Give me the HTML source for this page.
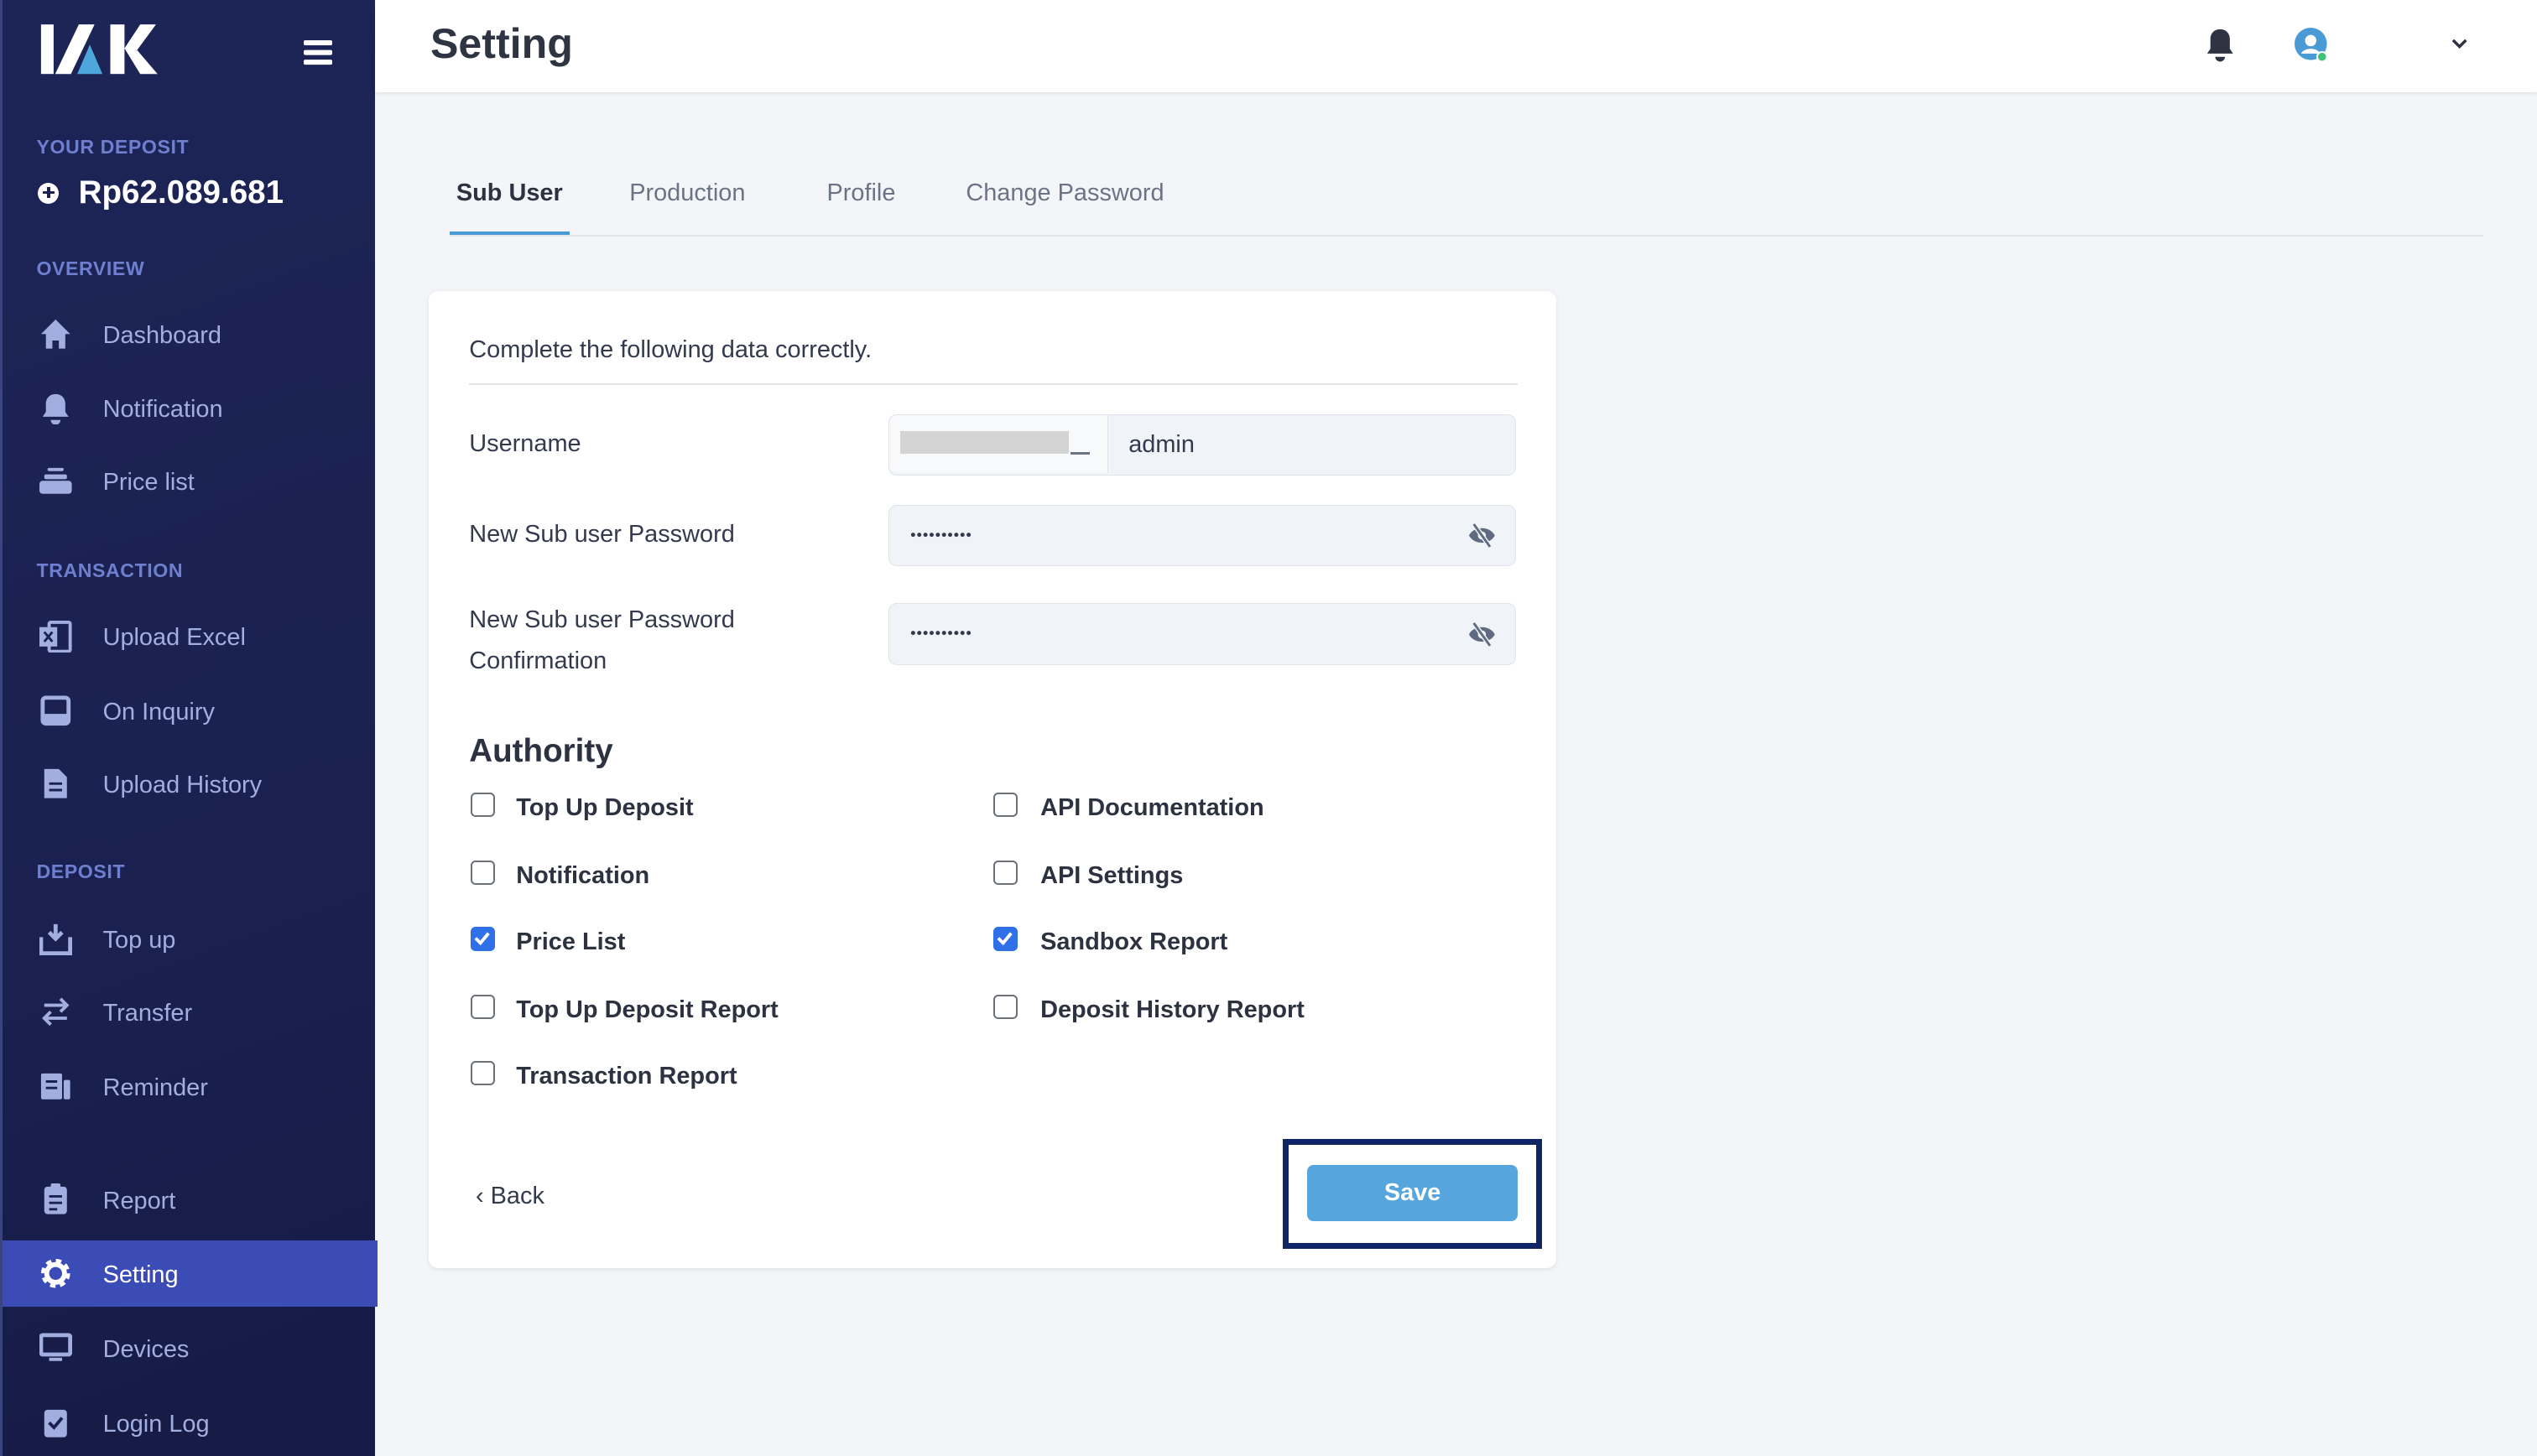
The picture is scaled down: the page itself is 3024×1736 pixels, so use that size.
<!DOCTYPE html>
<html><head><meta charset="utf-8"><style>
html,body{margin:0;padding:0}
body{width:1568px;height:888px;zoom:1.92857;overflow:hidden;background:#f3f5f9;font-family:"Liberation Sans",sans-serif;position:relative}
.sb{position:absolute;left:0;top:0;width:232px;height:900px;background:linear-gradient(160deg,#1d2557 0%,#1a2150 60%,#151b44 100%);border-left:2px solid #3a4580;box-sizing:border-box}
.a{position:absolute}
.sec{position:absolute;left:21px;font-size:12px;font-weight:bold;color:#6f7fcf;letter-spacing:.3px}
.it{position:absolute;left:0;width:232px;height:41px;display:flex;align-items:center;color:#a3aee0;font-size:15px}
.it svg{position:absolute;left:23px}
.it span{position:absolute;left:62px;top:13px}
.hdr{position:absolute;left:232px;top:0;right:0;height:57px;background:#fff;box-shadow:0 1px 3px rgba(0,0,0,.08)}
.card{position:absolute;left:265px;top:180px;width:697px;height:604px;background:#fff;border-radius:6px;box-shadow:0 1px 3px rgba(0,0,0,.08)}
.lbl{position:absolute;left:290px;font-size:15px;color:#333a4d}
.inp{position:absolute;left:549px;width:388px;height:38px;background:#f0f3f8;border:1px solid #e0e4ea;border-radius:5px;box-sizing:border-box}
.cb{position:absolute;width:15px;height:15px;border:1.5px solid #6b6f78;border-radius:3px;box-sizing:border-box;background:#fff}
.cb.on{background:#2f6fe8;border-color:#2f6fe8}
.cl{position:absolute;font-size:15px;font-weight:bold;color:#2d3240}
.tab{position:absolute;top:111px;font-size:15px;color:#6b7385}
.dots{position:absolute;left:13px;top:15px;font-size:6px;color:#333a4d;letter-spacing:0.2px}
</style></head><body>
<div class="sb">
 <svg class="a" style="left:23px;top:14px" width="74" height="34" viewBox="0 0 76 30" preserveAspectRatio="none"><rect x="1" y="1" width="8" height="27" fill="#fff"/><polygon points="10,28 25,1 35,1 20,28" fill="#fff"/><polygon points="24,28 32,12 40,28" fill="#4ea6dc"/><rect x="45" y="1" width="9" height="27" fill="#fff"/><polygon points="54,14 64,1 74,1 62,15 75,28 64,28" fill="#fff"/></svg>
 <div class="a" style="left:186px;top:25px;width:18px;height:3px;background:#fff;box-shadow:0 6px 0 #fff,0 12px 0 #fff;border-radius:1px"></div>
 <div class="sec" style="top:84px">YOUR DEPOSIT</div>
 <div class="a" style="left:22px;top:113px;width:13px;height:13px;border-radius:50%;background:#fff"></div>
 <div class="a" style="left:25px;top:118px;width:7px;height:2px;background:#1b2250"></div><div class="a" style="left:27.5px;top:115.5px;width:2px;height:7px;background:#1b2250"></div>
 <div class="a" style="left:47px;top:108px;font-size:20px;font-weight:bold;color:#fff">Rp62.089.681</div>
 <div class="sec" style="top:159px">OVERVIEW</div>
 <div class="it" style="top:186px"><svg width="20" height="20" viewBox="0 0 20 20"><path d="M10 1 1 10h3v9h4v-5h4v5h4v-9h3z" fill="#a3aee0"/></svg><span>Dashboard</span></div>
 <div class="it" style="top:232px"><svg width="20" height="20" viewBox="0 0 20 20"><path d="M10 1c-4 0-6 3-6 6v5l-2 3h16l-2-3V7c0-3-2-6-6-6zM7 17h6a3 3 0 0 1-6 0z" fill="#a3aee0"/></svg><span>Notification</span></div>
 <div class="it" style="top:277px"><svg width="20" height="20" viewBox="0 0 20 20"><rect x="0" y="10" width="20" height="8" rx="2" fill="#a3aee0"/><rect x="3" y="6" width="14" height="3" rx="1" fill="#a3aee0"/><rect x="5" y="2" width="10" height="2" rx="1" fill="#a3aee0"/></svg><span>Price list</span></div>
 <div class="sec" style="top:346px">TRANSACTION</div>
 <div class="it" style="top:373px"><svg width="20" height="20" viewBox="0 0 20 20"><rect x="6" y="1" width="13" height="18" rx="1" fill="none" stroke="#a3aee0" stroke-width="2"/><rect x="0" y="4" width="11" height="12" fill="#a3aee0"/><path d="M3 7l5 6M8 7l-5 6" stroke="#1b2250" stroke-width="1.5"/></svg><span>Upload Excel</span></div>
 <div class="it" style="top:419px"><svg width="20" height="20" viewBox="0 0 20 20"><rect x="2" y="2" width="16" height="16" rx="2" fill="none" stroke="#a3aee0" stroke-width="2.5"/><rect x="2" y="12" width="16" height="6" fill="#a3aee0"/></svg><span>On Inquiry</span></div>
 <div class="it" style="top:464px"><svg width="20" height="20" viewBox="0 0 20 20"><path d="M3 1h9l5 5v13H3z" fill="#a3aee0"/><path d="M6 10h8M6 14h8" stroke="#1b2250" stroke-width="1.5"/></svg><span>Upload History</span></div>
 <div class="sec" style="top:532px">DEPOSIT</div>
 <div class="it" style="top:560px"><svg width="20" height="20" viewBox="0 0 20 20"><path d="M1 9v10h18V9" fill="none" stroke="#a3aee0" stroke-width="2.5"/><path d="M10 1v9M6 6l4 4 4-4" stroke="#a3aee0" stroke-width="2.5" fill="none"/></svg><span>Top up</span></div>
 <div class="it" style="top:605px"><svg width="20" height="20" viewBox="0 0 20 20"><path d="M3 6h14M13 2l4 4-4 4M17 14H3M7 10l-4 4 4 4" stroke="#a3aee0" stroke-width="2" fill="none"/></svg><span>Transfer</span></div>
 <div class="it" style="top:651px"><svg width="20" height="20" viewBox="0 0 20 20"><rect x="1" y="2" width="13" height="16" rx="1" fill="#a3aee0"/><rect x="15" y="6" width="4" height="12" rx="1" fill="#a3aee0"/><path d="M4 7h7M4 11h7" stroke="#1b2250" stroke-width="1.5"/></svg><span>Reminder</span></div>
 <div class="it" style="top:721px"><svg width="20" height="20" viewBox="0 0 20 20"><rect x="3" y="2" width="14" height="17" rx="2" fill="#a3aee0"/><rect x="7" y="0" width="6" height="4" rx="1" fill="#a3aee0"/><path d="M6 8h8M6 12h8M6 16h5" stroke="#1b2250" stroke-width="1.5"/></svg><span>Report</span></div>
 <div class="it" style="top:767px;background:#3c4cb6;color:#fff"><svg width="20" height="20" viewBox="0 0 20 20"><circle cx="10" cy="10" r="7" fill="none" stroke="#fff" stroke-width="4" stroke-dasharray="3 2.5"/><circle cx="10" cy="10" r="5.5" fill="none" stroke="#fff" stroke-width="3"/></svg><span>Setting</span></div>
 <div class="it" style="top:813px"><svg width="20" height="20" viewBox="0 0 20 20"><rect x="1" y="2" width="18" height="12" rx="1" fill="none" stroke="#a3aee0" stroke-width="2.5"/><rect x="6" y="16" width="8" height="2" fill="#a3aee0"/></svg><span>Devices</span></div>
 <div class="it" style="top:859px"><svg width="20" height="20" viewBox="0 0 20 20"><rect x="3" y="2" width="14" height="17" rx="2" fill="#a3aee0"/><path d="M6 10l3 3 5-6" stroke="#1b2250" stroke-width="2" fill="none"/></svg><span>Login Log</span></div>
</div>
<div class="hdr">
 <div class="a" style="left:34px;top:12px;font-size:26px;font-weight:bold;color:#2f3442">Setting</div>
 <svg class="a" style="left:1130px;top:17px" width="20" height="22" viewBox="0 0 20 22"><path d="M10 1c-4 0-6 3-6 6v6l-2 3h16l-2-3V7c0-3-2-6-6-6zM7 18h6a3 3 0 0 1-6 0z" fill="#2f3442"/></svg>
 <svg class="a" style="left:1186px;top:17px" width="22" height="22" viewBox="0 0 22 22"><circle cx="10" cy="10" r="10" fill="#4a9ad6"/><circle cx="10" cy="8" r="3.5" fill="#fff"/><path d="M4 16c2-4 10-4 12 0" fill="#fff"/><circle cx="17" cy="18" r="3" fill="#3ec47a" stroke="#fff" stroke-width="1"/></svg>
 <svg class="a" style="left:1283px;top:23px" width="10" height="8" viewBox="0 0 10 8"><path d="M1 2l4 4 4-4" stroke="#2f3442" stroke-width="1.8" fill="none"/></svg>
</div>
<div class="tab" style="left:282px;color:#2d3240;font-weight:bold">Sub User</div>
<div class="tab" style="left:389px">Production</div>
<div class="tab" style="left:511px">Profile</div>
<div class="tab" style="left:597px">Change Password</div>
<div class="a" style="left:278px;top:145px;width:1257px;height:1px;background:#e2e5ea"></div>
<div class="a" style="left:278px;top:143px;width:74px;height:2px;background:#4a9ad6"></div>
<div class="card"></div>
<div class="lbl" style="top:208px">Complete the following data correctly.</div>
<div class="a" style="left:290px;top:237px;width:648px;height:1px;background:#e2e5ea"></div>
<div class="lbl" style="top:266px">Username</div>
<div class="inp" style="top:256px"><div class="a" style="left:0;top:0;width:135px;height:36px;background:#f7f9fb;border-right:1px solid #e0e4ea;border-radius:5px 0 0 5px"></div><div class="a" style="left:7px;top:10px;width:104px;height:14px;background:#d4d4d4"></div><div class="a" style="left:112px;top:23px;width:12px;height:1.5px;background:#6b7385"></div><div class="a" style="left:148px;top:10px;font-size:15px;color:#333a4d">admin</div></div>
<div class="lbl" style="top:322px">New Sub user Password</div>
<div class="inp" style="top:312px"><div class="dots">●●●●●●●●●●</div></div>
<div class="lbl" style="top:371px;line-height:25px">New Sub user Password<br>Confirmation</div>
<div class="inp" style="top:373px"><div class="dots">●●●●●●●●●●</div></div>
<svg class="a" style="left:907px;top:323px" width="18" height="16" viewBox="0 0 18 16"><path d="M1 8c3-6 13-6 16 0-3 6-13 6-16 0z" fill="#5f6b80"/><circle cx="9" cy="8" r="2.5" fill="#f0f3f8"/><path d="M4 1l10 14" stroke="#f0f3f8" stroke-width="3"/><path d="M4 1l10 14" stroke="#5f6b80" stroke-width="1.5"/></svg>
<svg class="a" style="left:907px;top:384px" width="18" height="16" viewBox="0 0 18 16"><path d="M1 8c3-6 13-6 16 0-3 6-13 6-16 0z" fill="#5f6b80"/><circle cx="9" cy="8" r="2.5" fill="#f0f3f8"/><path d="M4 1l10 14" stroke="#f0f3f8" stroke-width="3"/><path d="M4 1l10 14" stroke="#5f6b80" stroke-width="1.5"/></svg>
<div class="a" style="left:290px;top:453px;font-size:20px;font-weight:bold;color:#2d3240">Authority</div>
<div class="cb" style="left:291px;top:490px"></div><div class="cl" style="left:319px;top:491px">Top Up Deposit</div>
<div class="cb" style="left:291px;top:532px"></div><div class="cl" style="left:319px;top:533px">Notification</div>
<div class="cb on" style="left:291px;top:573px"><svg width="12" height="12" viewBox="0 0 12 12" style="position:absolute;left:0;top:0"><path d="M2 6l3 3 5-6" stroke="#fff" stroke-width="2" fill="none"/></svg></div><div class="cl" style="left:319px;top:574px">Price List</div>
<div class="cb" style="left:291px;top:615px"></div><div class="cl" style="left:319px;top:616px">Top Up Deposit Report</div>
<div class="cb" style="left:291px;top:656px"></div><div class="cl" style="left:319px;top:657px">Transaction Report</div>
<div class="cb" style="left:614px;top:490px"></div><div class="cl" style="left:643px;top:491px">API Documentation</div>
<div class="cb" style="left:614px;top:532px"></div><div class="cl" style="left:643px;top:533px">API Settings</div>
<div class="cb on" style="left:614px;top:573px"><svg width="12" height="12" viewBox="0 0 12 12" style="position:absolute;left:0;top:0"><path d="M2 6l3 3 5-6" stroke="#fff" stroke-width="2" fill="none"/></svg></div><div class="cl" style="left:643px;top:574px">Sandbox Report</div>
<div class="cb" style="left:614px;top:615px"></div><div class="cl" style="left:643px;top:616px">Deposit History Report</div>
<div class="a" style="left:294px;top:731px;font-size:15px;color:#333a4d">‹ Back</div>
<div class="a" style="left:793px;top:704px;width:160px;height:68px;border:4px solid #0f2566;box-sizing:border-box"></div>
<div class="a" style="left:808px;top:720px;width:130px;height:35px;background:#56a5dd;border-radius:4px;color:#fff;font-size:15px;font-weight:bold;text-align:center;line-height:35px">Save</div>
</body></html>
